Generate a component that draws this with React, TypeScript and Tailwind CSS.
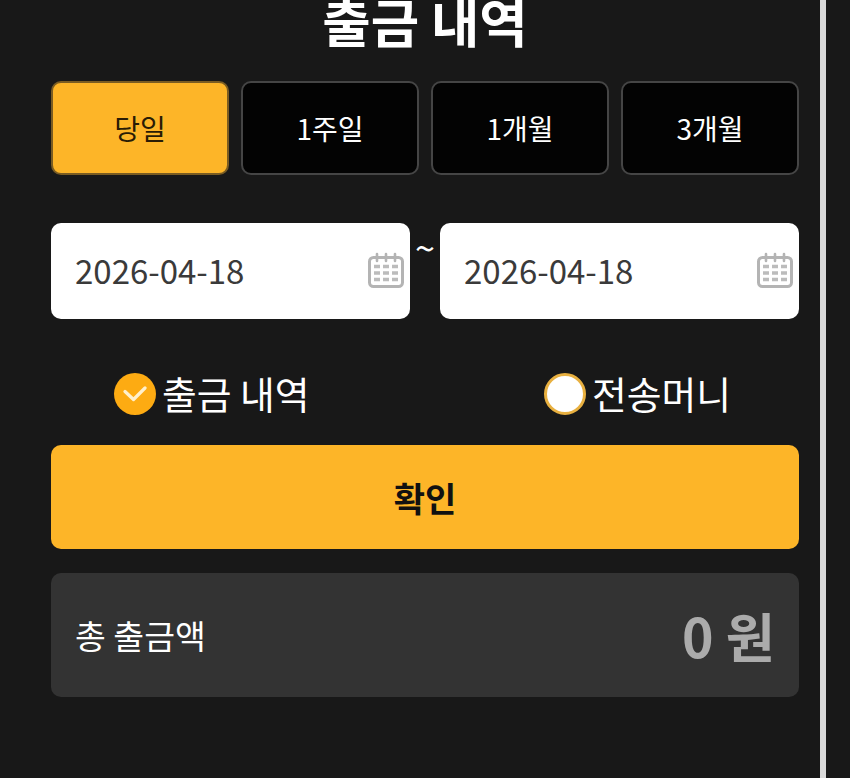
const FONT = "font-['Noto_Sans_CJK_KR','Noto_Sans',sans-serif]";

function CalendarIcon() {
  return (
    <svg width="38" height="38" viewBox="0 0 38 38" fill="none" className="shrink-0">
      <rect x="2.5" y="5.5" width="33" height="29" rx="4" stroke="#b4b4b4" strokeWidth="3" />
      <path d="M10 2v7M19 2v7M28 2v7" stroke="#b4b4b4" strokeWidth="2.6" strokeLinecap="round" />
      <path d="M7 14.5h6M16 14.5h6M25 14.5h6M7 21h6M16 21h6M25 21h6M7 27.5h6M16 27.5h6M25 27.5h6" stroke="#bcbcbc" strokeWidth="3.4" />
    </svg>
  );
}

function Tab({ label, active }: { label: string; active?: boolean }) {
  return (
    <button
      className={
        active
          ? "h-[94px] rounded-[10px] border-2 border-[#7a5c22] bg-[#fdb528] text-[28px] text-[#2a1c05]"
          : "h-[94px] rounded-[10px] border-2 border-[#454545] bg-[#030303] text-[28px] text-white"
      }
    >
      {label}
    </button>
  );
}

function DateBox({ value }: { value: string }) {
  return (
    <div className="flex h-[96px] flex-1 items-center justify-between rounded-[10px] bg-white pl-6 pr-[5px]">
      <span className="text-[33px] text-[#3a3a3a]">{value}</span>
      <CalendarIcon />
    </div>
  );
}

export default function App() {
  return (
    <div className={`${FONT} flex h-[778px] w-[850px] overflow-hidden bg-[#181818]`}>
      <main className="flex w-[820px] flex-col pl-[51px] pr-[21px]">
        <h1 className="-mt-[17px] h-[98px] text-center text-[52.6px] leading-[75px] font-bold text-white">출금 내역</h1>
        <div className="grid grid-cols-4 gap-3">
          <Tab label="당일" active />
          <Tab label="1주일" />
          <Tab label="1개월" />
          <Tab label="3개월" />
        </div>
        <div className="mt-12 flex">
          <DateBox value="2026-04-18" />
          <div className="w-[30px] text-center text-[36px] leading-[46px] text-white">~</div>
          <DateBox value="2026-04-18" />
        </div>
        <div className="mt-[54px] grid h-[42px] grid-cols-2">
          <div className="flex items-center gap-[6px] pl-[63px]">
            <span className="flex h-[42px] w-[42px] items-center justify-center rounded-full bg-[#fdab12]">
              <svg width="24" height="18" viewBox="0 0 24 18" fill="none">
                <path d="M2 6.5l8.5 8L22 3" stroke="#fff0cc" strokeWidth="3.2" strokeLinecap="round" strokeLinejoin="round" />
              </svg>
            </span>
            <span className="-translate-y-px text-[37.8px] leading-[42px] text-white">출금 내역</span>
          </div>
          <div className="flex items-center gap-[6px] pl-[119px]">
            <span className="h-[42px] w-[42px] rounded-full border-[3px] border-[#e8b040] bg-white" />
            <span className="-translate-y-px text-[37.8px] leading-[42px] text-white">전송머니</span>
          </div>
        </div>
        <button className="mt-[30px] h-[104px] rounded-[10px] bg-[#fdb528] text-[34px] font-bold text-[#111111]">확인</button>
        <div className="mt-6 flex h-[124px] items-center justify-between rounded-[10px] bg-[#333333] px-6">
          <span className="text-[33.5px] text-white">총 출금액</span>
          <span className="text-[53.5px] font-bold text-[#ababab]">0 원</span>
        </div>
      </main>
      <div className="h-full w-[6px] bg-[#d9d9d9]" />
    </div>
  );
}
